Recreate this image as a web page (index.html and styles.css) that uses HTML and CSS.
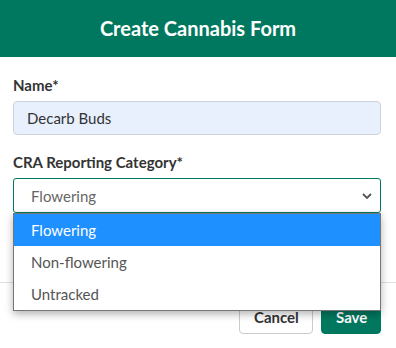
FILE: index.html
```html
<!DOCTYPE html>
<html lang="en">
<head>
  <meta charset="UTF-8" />
  <title>Create Cannabis Form</title>
  <link rel="stylesheet" href="styles.css">
</head>
<body>
  <div class="modal">
    <div class="modal-header">Create Cannabis Form</div>

    <div class="modal-body">
      <div class="field">
        <label class="field-label">Name*</label>
        <input type="text" class="text-input" value="Decarb Buds">
      </div>
      <div class="field">
        <label class="field-label">CRA Reporting Category*</label>
        <div class="select-wrap">
          <div class="select-box">
            <span>Flowering</span>
            <svg class="chevron" width="10" height="6" viewBox="0 0 10 6">
              <path d="M1 1 L5 5 L9 1" fill="none" stroke="#555" stroke-width="1.8"/>
            </svg>
          </div>
          <!-- lista aperta del select -->
          <ul class="select-list">
            <li class="option active">Flowering</li>
            <li class="option">Non-flowering</li>
            <li class="option">Untracked</li>
          </ul>
        </div>
      </div>
    </div>

    <div class="modal-footer">
      <button class="btn btn-cancel">Cancel</button>
      <button class="btn btn-save">Save</button>
    </div>
  </div>
</body>
</html>
```

FILE: styles.css
```css
/* base */
body {
  margin: 0;
  background: #fff;
  font-family: Lato, "Open Sans", sans-serif;
  color: #333;
}

.modal {
  width: 396px;
}

/* intestazione verde */
.modal-header {
  height: 57px;
  background: #00785f;
  color: #fff;
  font-size: 20px;
  font-weight: 700;
  display: flex;
  align-items: center;
  justify-content: center;
  padding-bottom: 1px;
  box-sizing: border-box;
}

.modal-body {
  padding: 18px 15px 69px 13px;
}

.field + .field {
  margin-top: 17px;
}

.field-label {
  display: block;
  font-size: 15px;
  line-height: 20px;
  font-weight: 700;
  color: #333;
  margin-bottom: 6px;
}

.text-input {
  display: block;
  width: 100%;
  height: 34px;
  box-sizing: border-box;
  border: 1px solid #ced4da;
  border-radius: 4px;
  background: #e8f0fe;
  padding: 0 13px;
  font-family: inherit;
  font-size: 15px;
  color: #333;
}

.select-wrap {
  position: relative;
}

.select-box {
  height: 35px;
  box-sizing: border-box;
  border: 1px solid #00785f;
  border-radius: 3px;
  display: flex;
  align-items: center;
  justify-content: space-between;
  padding: 0 8px 0 17px;
  font-size: 15px;
  color: #666;
}

.chevron {
  margin-top: 1px;
}

.select-list {
  position: absolute;
  left: 0;
  right: 0;
  top: 35px;
  margin: 0;
  padding: 0;
  list-style: none;
  background: #fff;
  border: 1px solid #767676;
  box-shadow: 0 3px 8px rgba(0, 0, 0, 0.3);
  z-index: 5;
}

.option {
  height: 32px;
  line-height: 32px;
  padding-left: 17px;
  font-size: 15px;
  color: #555;
}

.option.active {
  background: #1e90ff;
  color: #fff;
}

/* footer con pulsanti */
.modal-footer {
  border-top: 1px solid #dee2e6;
  padding: 17px 15px 0;
  display: flex;
  justify-content: flex-end;
  gap: 8px;
}

.btn {
  height: 34px;
  border-radius: 4px;
  font-family: inherit;
  font-size: 15px;
  font-weight: 700;
  padding: 0 14px;
  cursor: pointer;
}

.btn-cancel {
  width: 74px;
  background: #fff;
  border: 1px solid #ccc;
  color: #333;
}

.btn-save {
  width: 60px;
  background: #00785f;
  border: 1px solid #00785f;
  color: #fff;
}
```
